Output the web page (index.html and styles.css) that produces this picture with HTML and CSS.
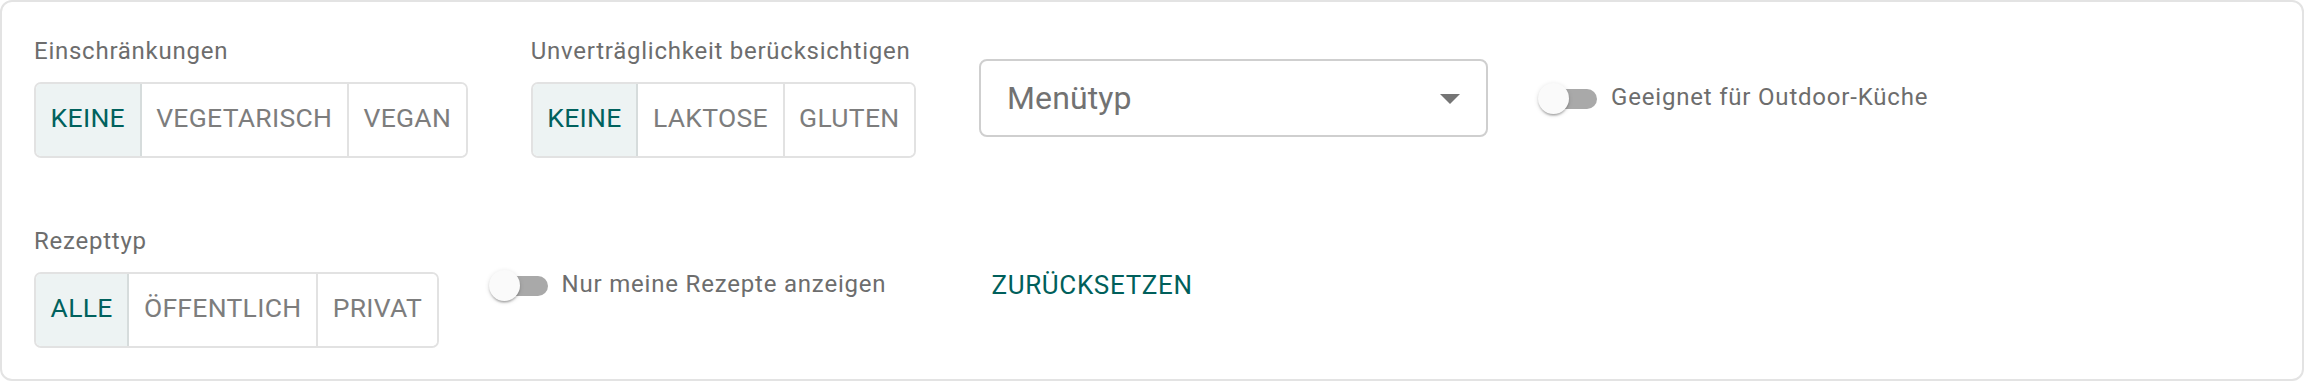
FILE: index.html
```html
<!DOCTYPE html>
<html lang="de">
<head>
<meta charset="utf-8">
<title>Filter</title>
<link rel="stylesheet" href="styles.css">
</head>
<body>
<div class="card">
  <div class="row">
    <div class="field">
      <div class="field-label">Einschränkungen</div>
      <div class="toggle-group">
        <button class="seg seg-active">KEINE</button>
        <button class="seg">VEGETARISCH</button>
        <button class="seg">VEGAN</button>
      </div>
    </div>
    <div class="field field-gap">
      <div class="field-label">Unverträglichkeit berücksichtigen</div>
      <div class="toggle-group">
        <button class="seg seg-active">KEINE</button>
        <button class="seg">LAKTOSE</button>
        <button class="seg">GLUTEN</button>
      </div>
    </div>
    <div class="select field-gap">
      <span class="select-value">Menütyp</span>
      <span class="select-arrow"></span>
    </div>
    <label class="slide">
      <span class="slide-switch"><span class="slide-track"></span><span class="slide-thumb"></span></span>
      <span class="slide-label">Geeignet für Outdoor-Küche</span>
    </label>
  </div>
  <div class="row row-second">
    <div class="field">
      <div class="field-label">Rezepttyp</div>
      <div class="toggle-group">
        <button class="seg seg-active">ALLE</button>
        <button class="seg">ÖFFENTLICH</button>
        <button class="seg">PRIVAT</button>
      </div>
    </div>
    <label class="slide">
      <span class="slide-switch"><span class="slide-track"></span><span class="slide-thumb"></span></span>
      <span class="slide-label">Nur meine Rezepte anzeigen</span>
    </label>
    <button class="reset">ZURÜCKSETZEN</button>
  </div>
</div>
</body>
</html>
```

FILE: styles.css
```css
* {
  box-sizing: border-box;
}

html, body {
  margin: 0;
  padding: 0;
  background: #ffffff;
}

body {
  font-family: Roboto, "Liberation Sans", Arial, sans-serif;
  width: 2304px;
  height: 382px;
}

.card {
  width: 2304px;
  height: 381px;
  border: 2px solid #e3e3e3;
  border-radius: 12px;
  padding: 35px 0 0 32px;
  background: #ffffff;
}

.row {
  display: flex;
  align-items: center;
}

.row-second {
  margin-top: 69px;
}

.field {
  display: flex;
  flex-direction: column;
  align-items: flex-start;
}

.field-gap {
  margin-left: 63px;
}

.field-label {
  font-size: 24px;
  line-height: 28px;
  letter-spacing: 0.75px;
  color: #6d6d6d;
  margin-bottom: 17px;
  white-space: nowrap;
}

.toggle-group {
  display: flex;
  height: 76px;
  border: 2px solid #e2e2e2;
  border-radius: 7px;
  overflow: hidden;
}

.seg {
  font-family: Roboto, "Liberation Sans", Arial, sans-serif;
  font-size: 26.5px;
  letter-spacing: 0.3px;
  color: #7d7d7d;
  background: #ffffff;
  border: 0;
  border-left: 2px solid #e2e2e2;
  padding: 0 14.6px 5px 14.6px;
  margin: 0;
  height: 100%;
  display: flex;
  align-items: center;
}

.seg:first-child {
  border-left: 0;
}

.seg-active {
  color: #00615d;
  background: #edf3f3;
}

.seg-active + .seg {
  border-left-color: #d6dcdc;
}

.select {
  width: 509px;
  height: 78px;
  border: 2px solid #cfcfcf;
  border-radius: 8px;
  display: flex;
  align-items: center;
  justify-content: space-between;
  padding: 0 26px 0 26px;
}

.select-value {
  font-size: 32px;
  color: #727272;
  letter-spacing: 0.1px;
}

.select-arrow {
  width: 0;
  height: 0;
  border-left: 10px solid transparent;
  border-right: 10px solid transparent;
  border-top: 10px solid #757575;
  margin-top: 3px;
}

.slide {
  display: flex;
  align-items: center;
  margin-left: 50px;
}

.slide-switch {
  position: relative;
  width: 59px;
  height: 32px;
  flex: none;
}

.slide-track {
  position: absolute;
  left: 5px;
  right: 0;
  top: 7px;
  height: 20px;
  border-radius: 10px;
  background: #a9a9a9;
}

.slide-thumb {
  position: absolute;
  left: 0;
  top: 1px;
  width: 31px;
  height: 31px;
  border-radius: 50%;
  background: #fafafa;
  box-shadow: 0 3px 2px -2px rgba(0, 0, 0, 0.2), 0 2px 2px 0 rgba(0, 0, 0, 0.14), 0 1px 5px 0 rgba(0, 0, 0, 0.12);
}

.slide-label {
  margin-left: 14px;
  font-size: 24px;
  letter-spacing: 0.8px;
  color: #6d6d6d;
  white-space: nowrap;
  padding-bottom: 2px;
}

.row-second .slide,
.row-second .reset {
  margin-bottom: 6px;
}

.reset {
  font-family: Roboto, "Liberation Sans", Arial, sans-serif;
  font-size: 26px;
  font-weight: 400;
  letter-spacing: 0.65px;
  color: #005f5b;
  background: transparent;
  border: 0;
  padding: 0 24px;
  margin-left: 81px;
  height: 54px;
}
```
